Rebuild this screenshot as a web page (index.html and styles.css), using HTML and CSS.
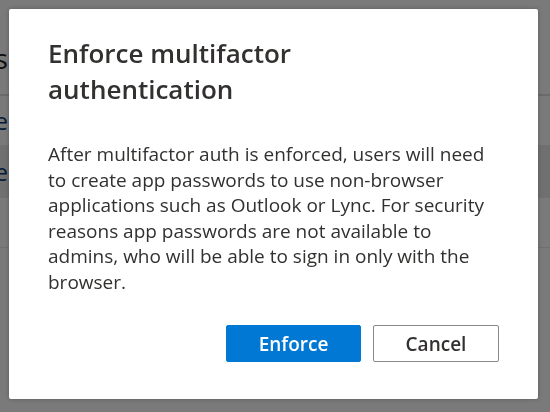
FILE: index.html
```html
<!DOCTYPE html>
<html lang="en">
<head>
<meta charset="utf-8">
<title>Enforce multifactor authentication</title>
<link rel="stylesheet" href="styles.css">
</head>
<body>
<div class="page">
  <div class="page-header"><span class="page-title">Active users</span></div>
  <div class="row"><a class="row-link">Update</a></div>
  <div class="row row-selected"><a class="row-link">Update</a></div>
  <div class="row"></div>
</div>
<div class="overlay"></div>
<div class="dialog" role="dialog" aria-labelledby="dlg-title">
  <h1 class="dialog-title" id="dlg-title">Enforce multifactor authentication</h1>
  <p class="dialog-text">After multifactor auth is enforced, users will need to create app passwords to use non-browser applications such as Outlook or Lync. For security reasons app passwords are not available to admins, who will be able to sign in only with the browser.</p>
  <div class="dialog-actions">
    <button class="btn btn-primary" type="button">Enforce</button>
    <button class="btn btn-default" type="button">Cancel</button>
  </div>
</div>
</body>
</html>
```
FILE: styles.css
```css
html, body {
  margin: 0;
  padding: 0;
  width: 550px;
  height: 412px;
  overflow: hidden;
  background: #ffffff;
  font-family: "Open Sans", "Noto Sans", sans-serif;
}

.page {
  display: flex;
  flex-direction: column;
  margin-left: -192px;
  width: 742px;
}

.page-header {
  height: 96px;
  display: flex;
  align-items: center;
  border-bottom: 2px solid #e1dfdd;
  box-sizing: border-box;
  padding-top: 22px;
}

.page-title {
  width: 200px;
  text-align: right;
  font-size: 27px;
  color: #201f1e;
  white-space: nowrap;
}

.row {
  height: 50px;
  display: flex;
  align-items: center;
  border-bottom: 1px solid #edebe9;
  box-sizing: border-box;
}

.row-selected {
  height: 52px;
  background: #ecebea;
}

.row-link {
  width: 200px;
  text-align: right;
  font-size: 23px;
  color: #0a3a78;
  white-space: nowrap;
}

.overlay {
  position: fixed;
  inset: 0;
  background: rgba(0, 0, 0, 0.52);
}

.dialog {
  position: absolute;
  left: 9px;
  top: 9px;
  width: 529px;
  height: 390px;
  box-sizing: border-box;
  background: #ffffff;
  border-radius: 2px;
  box-shadow: 0 0 4px rgba(0, 0, 0, 0.25);
  padding: 26px 39px 0 39px;
  display: flex;
  flex-direction: column;
}

.dialog-title {
  margin: 0;
  padding-right: 46px;
  font-size: 26px;
  line-height: 36px;
  font-weight: 600;
  color: #323130;
}

.dialog-text {
  margin: 35px 0 0 0;
  padding-right: 5px;
  font-size: 19px;
  line-height: 25.5px;
  color: #323130;
}

.dialog-actions {
  display: flex;
  justify-content: flex-end;
  gap: 12px;
  margin-top: auto;
  margin-bottom: 37px;
}

.btn {
  height: 37px;
  box-sizing: border-box;
  border-radius: 2px;
  font-family: inherit;
  font-size: 19px;
  font-weight: 600;
  padding: 0;
  cursor: pointer;
}

.btn-primary {
  width: 135px;
  background: #0078d4;
  border: 1px solid #0078d4;
  color: #ffffff;
}

.btn-default {
  width: 126px;
  background: #ffffff;
  border: 1px solid #8a8886;
  color: #323130;
}
```
